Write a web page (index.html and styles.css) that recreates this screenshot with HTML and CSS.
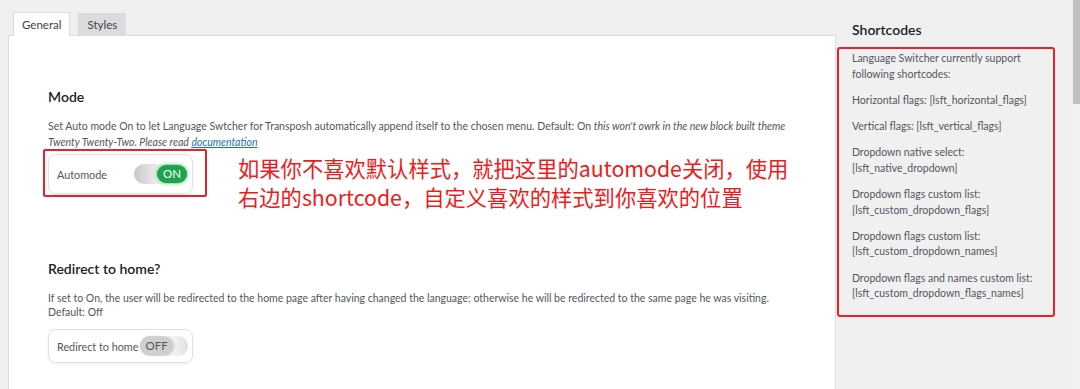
FILE: index.html
```html
<!DOCTYPE html>
<html lang="zh-CN">
<head>
    <meta charset="UTF-8">
    <title>Language Switcher for Transposh</title>
    <link rel="stylesheet" href="styles.css">
</head>
<body>
<div class="page">
    <div class="main">
        <div class="tabs">
            <span class="tab active">General</span>
            <span class="tab">Styles</span>
        </div>
        <div class="panel">
            <section class="section first">
                <h2>Mode</h2>
                <p class="desc">Set Auto mode On to let Language Swtcher for Transposh automatically append itself to the chosen menu. Default: On <em>this won't owrk in the new block built theme</em><br><em>Twenty Twenty-Two. Please read <a href="#">documentation</a></em></p>
                <div class="option-row">
                    <div class="mark">
                        <div class="option">
                            <span class="label">Automode</span>
                            <span class="switch on"><span class="knob">ON</span></span>
                        </div>
                    </div>
                    <p class="note">如果你不喜欢默认样式，就把这里的automode关闭，使用<br>右边的shortcode，自定义喜欢的样式到你喜欢的位置</p>
                </div>
            </section>
            <section class="section">
                <h2>Redirect to home?</h2>
                <p class="desc tight">If set to On, the user will be redirected to the home page after having changed the language; otherwise he will be redirected to the same page he was visiting.<br>Default: Off</p>
                <div class="option small">
                    <span class="label">Redirect to home</span>
                    <span class="switch off"><span class="knob">OFF</span></span>
                </div>
            </section>
        </div>
    </div>
    <aside class="side">
        <h3>Shortcodes</h3>
        <div class="codes">
            <p>Language Switcher currently support following shortcodes:</p>
            <p>Horizontal flags: [lsft_horizontal_flags]</p>
            <p>Vertical flags: [lsft_vertical_flags]</p>
            <p>Dropdown native select:<br>[lsft_native_dropdown]</p>
            <p>Dropdown flags custom list:<br>[lsft_custom_dropdown_flags]</p>
            <p>Dropdown flags custom list:<br>[lsft_custom_dropdown_names]</p>
            <p>Dropdown flags and names custom list:<br>[lsft_custom_dropdown_flags_names]</p>
        </div>
    </aside>
    <div class="scrollbar"><div class="thumb"></div></div>
</div>
</body>
</html>
```

FILE: styles.css
```css
body {
    margin: 0;
    background-color: #f0f0f1;
    font-family: Lato, "Noto Sans CJK SC", sans-serif;
    color: #50575e;
    overflow: hidden;
}

.page {
    display: flex;
    height: 389px;
}

/* left column: tabs + settings panel */
.main {
    width: 828px;
    margin-left: 8px;
    padding-top: 12px;
}

.tabs {
    display: flex;
    align-items: flex-end;
    gap: 8px;
    padding-left: 5px;
    height: 23px;
}

.tab {
    font-size: 11.5px;
    padding: 0 8px;
    height: 21px;
    line-height: 21px;
    background-color: #dcdcde;
    color: #3c434a;
    border: 1px solid #dcdcde;
    border-bottom: none;
}

.tab.active {
    height: 23px;
    line-height: 23px;
    background-color: #fff;
    position: relative;
    top: 1px;
}

.panel {
    background-color: #fff;
    border: 1px solid #dcdcde;
    border-bottom: none;
    height: 360px;
    padding: 0 38px 0 39px;
}

.section h2 {
    font-size: 14px;
    font-weight: 600;
    color: #1d2327;
    margin: 0;
    line-height: 20px;
}

.section.first {
    padding-top: 51px;
}

.section + .section {
    padding-top: 48px;
}

.desc {
    font-size: 10.5px;
    line-height: 16px;
    margin: 11px 0 -1px;
}

.desc.tight {
    line-height: 14px;
    margin: 12px 0 10px;
}

.desc a {
    color: #2271b1;
}

.option-row {
    display: flex;
    align-items: flex-start;
}

.mark {
    border: 2px solid #e8212b;
    border-radius: 2px;
    padding: 3px 12px 1px 3px;
    margin-left: -5px;
}

.option {
    display: flex;
    align-items: center;
    width: 145px;
    height: 40px;
    box-sizing: border-box;
    padding: 0 4px 0 8px;
    border: 1px solid #e2e2e2;
    border-radius: 8px;
    box-shadow: 0 1px 3px rgba(0, 0, 0, 0.08);
    font-size: 10.8px;
}

.option .label {
    flex: 1;
}

.option.small {
    height: 34px;
}

.switch {
    width: 54px;
    height: 20px;
    border-radius: 10px;
    display: flex;
    align-items: center;
}

.switch.on {
    background: linear-gradient(to right, #c8c8c8, #f4f4f4 50%, #ececec);
    justify-content: flex-end;
}

.small .label {
    flex: none;
    margin-right: 2px;
}

.switch.off {
    width: 48px;
    background: linear-gradient(to right, #d6d6d6, #f4f4f4 70%, #dedede);
}

.knob {
    height: 18px;
    line-height: 18px;
    border-radius: 9px;
    font-size: 11.5px;
    padding: 0 6px;
}

.switch.on .knob {
    background-color: #1fa24c;
    color: #fff;
    margin-right: 1px;
    box-shadow: 0 0 4px #46c86e;
}

.switch.off .knob {
    padding: 0 5px;
    background-color: #cfcfcf;
    color: #50575e;
    box-shadow: 1px 0 3px rgba(0, 0, 0, 0.2);
}

.note {
    margin: 4px 0 0 31px;
    font-size: 21.3px;
    line-height: 29px;
    color: #f01a1a;
    font-family: "Noto Sans CJK SC", sans-serif;
}

/* right column: shortcodes */
.side {
    width: 237px;
    padding-top: 20px;
}

.side h3 {
    margin: 0 0 7px 16px;
    font-size: 14px;
    font-weight: 600;
    color: #1d2327;
    line-height: 20px;
}

.codes {
    width: 218px;
    margin-left: 1px;
    border: 2px solid #e8212b;
    border-radius: 3px;
    padding: 2px 0 13px 13px;
    box-sizing: border-box;
}

.codes p {
    margin: 0 0 10.8px;
    font-size: 10.5px;
    line-height: 15.5px;
}

.codes p:last-child {
    margin-bottom: 0;
}

.scrollbar {
    width: 7px;
    background-color: #f1f1f1;
}

.thumb {
    height: 104px;
    background-color: #c1c1c1;
}
```
